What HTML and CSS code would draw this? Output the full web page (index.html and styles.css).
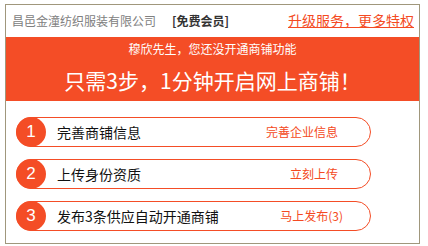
FILE: index.html
```html
<!DOCTYPE html>
<html lang="zh-CN">
<head>
<meta charset="utf-8">
<link rel="stylesheet" href="styles.css">
</head>
<body>
<div class="card">
  <div class="header">
    <span class="company">昌邑金潼纺织服装有限公司</span>
    <span class="member">[免费会员]</span>
    <a class="upgrade" href="#">升级服务，更多特权</a>
  </div>
  <div class="banner">
    <div class="greet">穆欣先生，您还没开通商铺功能</div>
    <div class="slogan">只需3步，1分钟开启网上商铺！</div>
  </div>
  <div class="steps">
    <div class="step">
      <span class="num">1</span>
      <span class="label">完善商铺信息</span>
      <a class="action" href="#">完善企业信息</a>
    </div>
    <div class="step">
      <span class="num">2</span>
      <span class="label">上传身份资质</span>
      <a class="action" href="#">立刻上传</a>
    </div>
    <div class="step">
      <span class="num">3</span>
      <span class="label">发布3条供应自动开通商铺</span>
      <a class="action action-wide" href="#">马上发布(3)</a>
    </div>
  </div>
</div>
</body>
</html>
```

FILE: styles.css
```css
* { box-sizing: border-box; }
html, body { margin: 0; padding: 0; background: #fff; }
body {
  font-family: "Noto Sans CJK SC", "Noto Sans", sans-serif;
}
.card {
  margin: 4px 0 0 5px;
  width: 415px;
  height: 240px;
  border: 1px solid #a0977c;
  background: #fff;
}
.header {
  height: 32px;
  display: flex;
  align-items: center;
  padding: 0 5px 0 6px;
}
.company {
  font-size: 12px;
  color: #808080;
  line-height: 1;
}
.member {
  margin-left: 16px;
  font-size: 12px;
  font-weight: bold;
  color: #333;
  line-height: 1;
}
.upgrade {
  margin-left: auto;
  font-size: 14px;
  color: #f44a22;
  text-decoration: underline;
  line-height: 1;
  position: relative;
  top: -1px;
}
.banner {
  height: 64px;
  background: #f44d26;
  color: #fff;
  text-align: center;
  display: flex;
  flex-direction: column;
  align-items: center;
}
.greet {
  font-size: 12px;
  line-height: 1;
  margin-top: 6px;
}
.slogan {
  font-size: 21px;
  line-height: 1;
  margin-top: 15px;
}
.steps {
  display: flex;
  flex-direction: column;
  gap: 12px;
  padding: 16px 48px 0 10px;
}
.step {
  height: 30px;
  border: 1px solid #f44d26;
  border-radius: 15px;
  display: flex;
  align-items: center;
}
.num {
  width: 30px;
  height: 30px;
  margin: -1px 0 -1px -1px;
  border-radius: 50%;
  background: #f44d26;
  color: #fff;
  font-family: "Liberation Sans", Arial, sans-serif;
  font-size: 17px;
  display: flex;
  align-items: center;
  justify-content: center;
  flex: none;
}
.label {
  margin-left: 11px;
  font-size: 14px;
  color: #111;
  line-height: 1;
}
.action {
  margin-left: auto;
  margin-right: 32px;
  font-size: 12px;
  color: #f44a22;
  text-decoration: none;
  line-height: 1;
}
.action-wide { margin-right: 27px; }
```
